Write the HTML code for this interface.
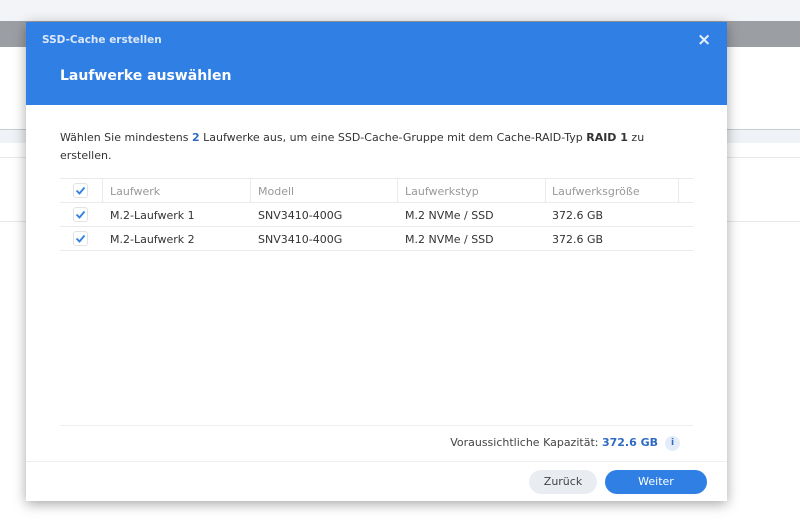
<!DOCTYPE html>
<html><head><meta charset="utf-8"><style>
*{margin:0;padding:0;box-sizing:border-box}
body{width:800px;height:524px;position:relative;overflow:hidden;background:#fff;font-family:"DejaVu Sans","Liberation Sans",sans-serif;font-size:11px;color:#333}
.a{position:absolute}
.cb{position:absolute;left:13px;width:15px;height:15px;border:1px solid #dfe3e8;border-radius:3px;background:#fff}
.cb svg{position:absolute;left:1px;top:1px}
.row{position:absolute;left:60px;width:633px;height:24px;border-bottom:1px solid #e8eaed}
.c{position:absolute;top:6px}
</style></head><body>
<div class="a" style="left:0;top:0;width:800px;height:21px;background:#f3f4f7"></div>
<div class="a" style="left:0;top:21px;width:800px;height:26px;background:#9b9fa4"></div>
<div class="a" style="left:0;top:129px;width:800px;height:1px;background:#c8ccd1"></div>
<div class="a" style="left:0;top:130px;width:800px;height:13px;background:#eff2f6"></div>
<div class="a" style="left:0;top:157px;width:800px;height:1px;background:#e6e8eb"></div>
<div class="a" style="left:0;top:221px;width:800px;height:1px;background:#e6e8eb"></div>

<div class="a" style="left:26px;top:22px;width:701px;height:479px;background:#fff;box-shadow:0 3px 12px rgba(0,0,0,.35)">
 <div class="a" style="left:0;top:0;width:701px;height:83px;background:#2f7fe4"></div>
 <div class="a" style="left:16px;top:12px;color:#dce8fa;font-weight:bold;font-size:10.5px">SSD-Cache erstellen</div>
 <div class="a" style="left:671px;top:8px;color:#e6effc;font-size:17px;font-weight:bold">×</div>
 <div class="a" style="left:34px;top:46px;color:#fff;font-weight:bold;font-size:14px">Laufwerke auswählen</div>
 <div class="a" style="left:34px;top:107px;width:612px;line-height:18px;color:#333">Wählen Sie mindestens <b style="color:#2f6bc4">2</b> Laufwerke aus, um eine SSD-Cache-Gruppe mit dem Cache-RAID-Typ <b>RAID 1</b> zu erstellen.</div>
</div>

<div class="row" style="top:178px;border-top:1px solid #e8eaed;height:25px;color:#999">
 <div class="cb" style="top:4px"><svg width="11" height="11"><path d="M1.5 5.5 L4.5 8.5 L9.5 2.5" stroke="#2f7fe4" stroke-width="1.8" fill="none"/></svg></div>
 <div class="a" style="left:42px;top:0;width:1px;height:24px;background:#e8eaed"></div>
 <div class="a" style="left:190px;top:0;width:1px;height:24px;background:#e8eaed"></div>
 <div class="a" style="left:337px;top:0;width:1px;height:24px;background:#e8eaed"></div>
 <div class="a" style="left:485px;top:0;width:1px;height:24px;background:#e8eaed"></div>
 <div class="a" style="left:618px;top:0;width:1px;height:24px;background:#e8eaed"></div>
 <div class="c" style="left:50px">Laufwerk</div><div class="c" style="left:198px">Modell</div><div class="c" style="left:345px">Laufwerkstyp</div><div class="c" style="left:492px">Laufwerksgröße</div>
</div>
<div class="row" style="top:203px">
 <div class="cb" style="top:4px"><svg width="11" height="11"><path d="M1.5 5.5 L4.5 8.5 L9.5 2.5" stroke="#2f7fe4" stroke-width="1.8" fill="none"/></svg></div>
 <div class="c" style="left:50px">M.2-Laufwerk 1</div><div class="c" style="left:198px">SNV3410-400G</div><div class="c" style="left:345px">M.2 NVMe / SSD</div><div class="c" style="left:492px">372.6 GB</div>
</div>
<div class="row" style="top:227px">
 <div class="cb" style="top:4px"><svg width="11" height="11"><path d="M1.5 5.5 L4.5 8.5 L9.5 2.5" stroke="#2f7fe4" stroke-width="1.8" fill="none"/></svg></div>
 <div class="c" style="left:50px">M.2-Laufwerk 2</div><div class="c" style="left:198px">SNV3410-400G</div><div class="c" style="left:345px">M.2 NVMe / SSD</div><div class="c" style="left:492px">372.6 GB</div>
</div>

<div class="a" style="left:60px;top:425px;width:633px;height:1px;background:#eceef1"></div>
<div class="a" style="right:142px;top:436px;color:#444;white-space:nowrap">Voraussichtliche Kapazität: <b style="color:#2f6bc4">372.6 GB</b></div>
<div class="a" style="left:665px;top:436px;width:15px;height:15px;border-radius:50%;background:#e3ecf8;color:#2f6bc4;font-size:9px;font-weight:bold;text-align:center;line-height:15px">i</div>
<div class="a" style="left:26px;top:461px;width:701px;height:1px;background:#eceef1"></div>
<div class="a" style="left:529px;top:470px;width:68px;height:24px;border-radius:12px;background:#e9edf2;color:#444;text-align:center;line-height:24px">Zurück</div>
<div class="a" style="left:605px;top:470px;width:102px;height:24px;border-radius:12px;background:#2f7fe4;color:#fff;text-align:center;line-height:24px">Weiter</div>
</body></html>
